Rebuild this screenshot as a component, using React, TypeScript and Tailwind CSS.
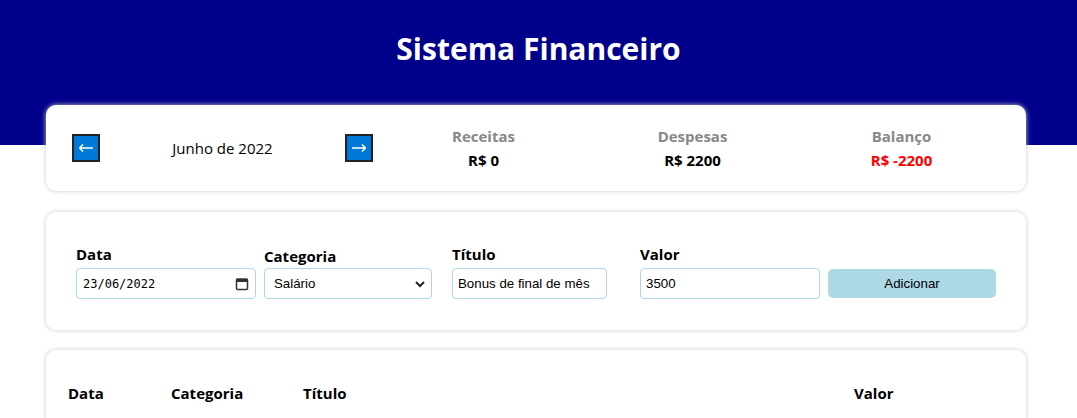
function Arrow({ dir }: { dir: "left" | "right" }) {
  return (
    <button className="flex h-[28px] w-[28px] items-center justify-center border-2 border-[#222] bg-[#0078d7]">
      <svg width="16" height="10" viewBox="0 0 16 10" className={dir === "right" ? "rotate-180" : ""}>
        <path d="M1.5 5H15M1.5 5L5 1.5M1.5 5L5 8.5" fill="none" stroke="#fff" strokeWidth="1.6" />
      </svg>
    </button>
  );
}

export default function App() {
  const font = { fontFamily: '"Open Sans", "Noto Sans", sans-serif' };
  const arial = { fontFamily: '"Liberation Sans", Arial, sans-serif' };
  return (
    <main className="min-h-screen bg-white text-black" style={font}>
      {/* header */}
      <header className="h-[145px] bg-[#00008b] pt-[27px] text-center">
        <h1 className="text-[30px] font-bold leading-[44px] text-white">Sistema Financeiro</h1>
      </header>

      <div className="-mt-[40px] ml-[46px] w-[980px]">
        {/* resumo */}
        <section className="flex h-[86px] items-center rounded-[10px] bg-white pl-[26px] shadow-[0_0_5px_#ccc]">
          <div className="flex w-[301px] items-center">
            <Arrow dir="left" />
            <div className="flex-1 text-center text-[15px]">Junho de 2022</div>
            <Arrow dir="right" />
          </div>
          <div className="ml-[6px] flex">
            {[
              ["Receitas", "R$ 0", "text-black"],
              ["Despesas", "R$ 2200", "text-black"],
              ["Balanço", "R$ -2200", "text-[#ff0000]"],
            ].map(([t, v, c]) => (
              <div key={t} className="w-[209px] text-center">
                <div className="text-[15px] font-bold leading-[24px] text-[#888]">{t}</div>
                <div className={`text-[15px] font-bold leading-[24px] ${c}`}>{v}</div>
              </div>
            ))}
          </div>
        </section>

        {/* formulario */}
        <section className="mt-[21px] grid h-[118px] grid-cols-[188px_188px_188px_188px_188px] items-end rounded-[10px] bg-white pb-[31px] pl-[30px] shadow-[0_0_5px_#ccc]">
          <label className="flex flex-col">
            <span className="mb-[4px] text-[15px] font-bold leading-[20px]">Data</span>
            <div
              className="flex h-[31px] w-[180px] items-center justify-between rounded-[4px] border border-[#add8e6] pl-[6px] pr-[6px] text-[13px]"
              style={{ fontFamily: '"DejaVu Sans Mono", monospace' }}
            >
              <span className="text-[12px]">23/06/2022</span>
              <svg width="14" height="14" viewBox="0 0 14 14">
                <rect x="1.5" y="2" width="11" height="10.5" rx="1" fill="none" stroke="#333" strokeWidth="1.5" />
                <rect x="1.5" y="2" width="11" height="3" fill="#333" />
              </svg>
            </div>
          </label>
          <label className="flex flex-col">
            <span className="mb-[2px] text-[15px] font-bold leading-[20px]">Categoria</span>
            <div
              className="flex h-[31px] w-[168px] items-center justify-between rounded-[4px] border border-[#add8e6] pl-[9px] pr-[5px] text-[13.3px]"
              style={arial}
            >
              <span>Salário</span>
              <svg width="12" height="12" viewBox="0 0 12 12">
                <path d="M2 4l4 4 4-4" fill="none" stroke="#222" strokeWidth="2" />
              </svg>
            </div>
          </label>
          <label className="flex flex-col">
            <span className="mb-[4px] text-[15px] font-bold leading-[20px]">Título</span>
            <input
              readOnly
              value="Bonus de final de mês"
              className="h-[31px] w-[155px] rounded-[4px] border border-[#add8e6] px-[5px] text-[13.3px] outline-none"
              style={arial}
            />
          </label>
          <label className="flex flex-col">
            <span className="mb-[4px] text-[15px] font-bold leading-[20px]">Valor</span>
            <input
              readOnly
              value="3500"
              className="h-[31px] w-[180px] rounded-[4px] border border-[#add8e6] px-[5px] text-[13.3px] outline-none"
              style={arial}
            />
          </label>
          <div className="flex">
            <button className="mb-[1px] h-[29px] w-[168px] rounded-[5px] bg-[#add8e6] text-[13.3px] text-black" style={arial}>
              Adicionar
            </button>
          </div>
        </section>

        {/* tabela */}
        <section className="mt-[20px] rounded-[10px] bg-white px-[22px] pt-[30px] pb-[20px] shadow-[0_0_5px_#ccc]">
          <table className="w-full text-left">
            <thead>
              <tr className="text-[15px] font-bold">
                <th className="w-[103px] py-[2px]">Data</th>
                <th className="w-[132px] py-[2px]">Categoria</th>
                <th className="py-[2px]">Título</th>
                <th className="w-[150px] py-[2px]">Valor</th>
              </tr>
            </thead>
          </table>
        </section>
      </div>
    </main>
  );
}
